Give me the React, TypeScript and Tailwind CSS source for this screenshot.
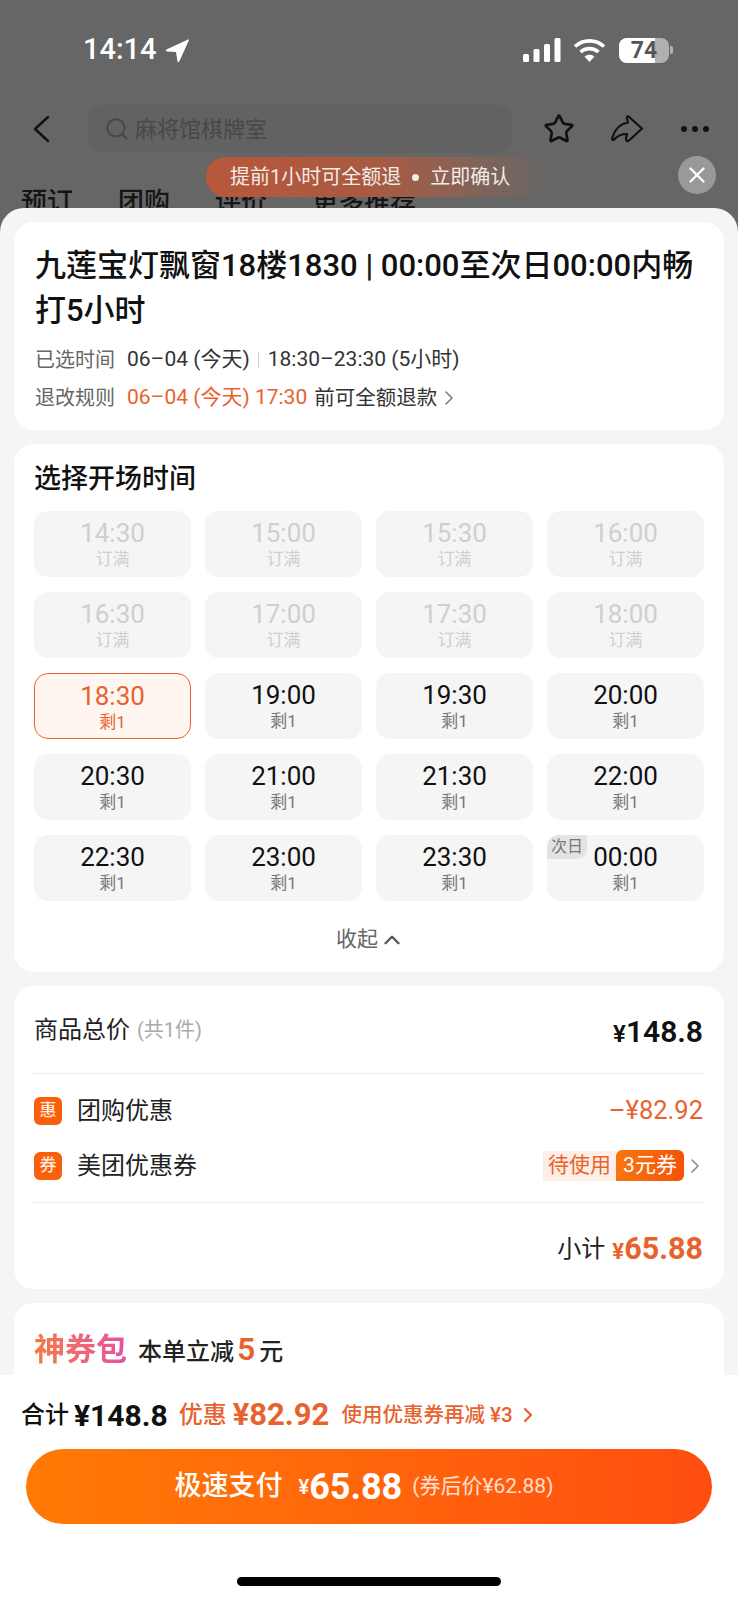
import { ChevronRight, ChevronUp, Search, Star, X } from 'lucide-react';

const slots = [
  { time: '14:30', full: true },
  { time: '15:00', full: true },
  { time: '15:30', full: true },
  { time: '16:00', full: true },
  { time: '16:30', full: true },
  { time: '17:00', full: true },
  { time: '17:30', full: true },
  { time: '18:00', full: true },
  { time: '18:30', selected: true },
  { time: '19:00' },
  { time: '19:30' },
  { time: '20:00' },
  { time: '20:30' },
  { time: '21:00' },
  { time: '21:30' },
  { time: '22:00' },
  { time: '22:30' },
  { time: '23:00' },
  { time: '23:30' },
  { time: '00:00', nextDay: true },
];

function StatusBar() {
  return (
    <div className="h-[100px] flex items-center pl-[83px] pr-[65px]">
      <span className="text-[29px] font-medium text-white">14:14</span>
      <svg className="ml-[8px]" width="24" height="25" viewBox="0 0 24 25" fill="#fff">
        <path d="M23 1.5 L1.5 11.5 Q0 12.8 2 13.5 L11 14 L12.5 23.5 Q13.5 25 14.5 23 L23.8 2.5 Q24 0.8 23 1.5Z" />
      </svg>
      <div className="ml-auto flex items-center">
        <svg width="38" height="24" viewBox="0 0 38 24" fill="#fff">
          <rect x="0" y="16" width="6" height="8" rx="1.5" />
          <rect x="10.5" y="11" width="6" height="13" rx="1.5" />
          <rect x="21" y="6" width="6" height="18" rx="1.5" />
          <rect x="31.5" y="0" width="6" height="24" rx="1.5" />
        </svg>
        <svg className="ml-[12px]" width="33" height="25" viewBox="0 0 33 25" fill="none" stroke="#fff" strokeWidth="3.6" strokeLinecap="butt">
          <path d="M2 8.5 C10 1 23 1 31 8.5" />
          <path d="M7.5 14 C12.5 9.5 20.5 9.5 25.5 14" />
          <path d="M16.5 24 L11.5 18.5 C14.5 16 18.5 16 21.5 18.5Z" fill="#fff" stroke="none" />
        </svg>
        <div className="ml-[13px] w-[50px] h-[25px] rounded-[8px] overflow-hidden relative flex bg-[#b0b0b0]">
          <div className="w-[36px] bg-white" />
          <span className="absolute inset-0 flex items-center justify-center text-[23px] font-bold text-[#555] leading-none">74</span>
        </div>
        <div className="ml-[1px] w-[3px] h-[8px] rounded-r-[2px] bg-[#b0b0b0]" />
      </div>
    </div>
  );
}

function NavBar() {
  return (
    <div className="mt-[5px] h-[48px] flex items-center">
      <svg className="ml-[32px]" width="20" height="28" viewBox="0 0 20 28" fill="none" stroke="#111" strokeWidth="2.4" strokeLinecap="round" strokeLinejoin="round">
        <path d="M16 2 L3 14 L16 26" />
      </svg>
      <div className="ml-[36px] w-[424px] h-[48px] rounded-[14px] bg-[#626262] flex items-center pl-[16px]">
        <Search size={26} strokeWidth={1.8} className="text-[#484848]" />
        <span className="ml-[5px] text-[22px] text-[#484848]">麻将馆棋牌室</span>
      </div>
      <Star className="ml-[31px] text-[#111]" size={32} strokeWidth={2} />
      <svg className="ml-[36px]" width="33" height="28" viewBox="0 0 33 28" fill="none" stroke="#111" strokeWidth="2.2" strokeLinejoin="round">
        <path d="M17.5 1.5 L31 13.5 L17.5 26 Q15.5 27 15 24 L16 19 Q8 19 3 24.5 Q0.5 26 1.5 22 Q6 9 17 7.5 L16 4 Q15.5 1 17.5 1.5Z" />
      </svg>
      <div className="ml-[37px] flex gap-[5px]">
        <span className="w-[6px] h-[6px] rounded-full bg-[#111]" />
        <span className="w-[6px] h-[6px] rounded-full bg-[#111]" />
        <span className="w-[6px] h-[6px] rounded-full bg-[#111]" />
      </div>
    </div>
  );
}

function SlotCell({ time, full, selected, nextDay }: { time: string; full?: boolean; selected?: boolean; nextDay?: boolean }) {
  let box = 'bg-[#f5f5f5]';
  let timeColor = 'text-[#111]';
  let subColor = 'text-[#777]';
  if (full) {
    timeColor = 'text-[#cfcfcf]';
    subColor = 'text-[#cfcfcf]';
  }
  if (selected) {
    box = 'bg-[#fff6f1] border-[1.5px] border-[#e8622e]';
    timeColor = 'text-[#e8622e]';
    subColor = 'text-[#e8622e]';
  }
  return (
    <div className={`relative h-[66px] rounded-[14px] flex flex-col items-center justify-start pt-[8px] ${box}`}>
      {nextDay && (
        <span className="absolute left-0 top-0 w-[40px] h-[24px] rounded-tl-[12px] rounded-br-[10px] bg-[#e3e3e3] flex items-center justify-center text-[16px] text-[#777]">次日</span>
      )}
      <span className={`text-[26px] leading-[29px] ${timeColor}`}>{time}</span>
      <span className={`text-[17px] leading-[22px] ${subColor}`}>{full ? '订满' : '剩1'}</span>
    </div>
  );
}

export default function App() {
  return (
    <div className="relative w-[738px] h-[1600px] overflow-hidden bg-[#666] flex flex-col font-['Roboto','Noto_Sans_CJK_SC',sans-serif]">
      {/* Page behind the sheet */}
      <div className="h-[208px] shrink-0 overflow-hidden">
        <StatusBar />
        <NavBar />
        <div className="mt-[34px] pl-[21px] flex gap-[45px] text-[26px] leading-[30px] font-medium text-[#151515]">
          <span>预订</span>
          <span>团购</span>
          <span>评价</span>
          <span>更多推荐</span>
        </div>
      </div>

      {/* Toast */}
      <div className="absolute left-[206px] top-[157px] w-[340px] h-[40px] rounded-l-[20px] bg-linear-to-r from-[#b8573a] via-[#a85a42] to-[#666] flex items-center pl-[24px] text-[20px] text-[#f0ece8]">
        提前1小时可全额退
        <span className="mx-[11px] w-[7px] h-[7px] rounded-full bg-[#f0ece8]" />
        立即确认
      </div>
      <div className="absolute left-[678px] top-[156px] w-[38px] h-[38px] rounded-full bg-[#999] flex items-center justify-center">
        <X size={26} strokeWidth={2.2} className="text-white" />
      </div>

      {/* Sheet */}
      <div className="flex-1 min-h-0 rounded-t-[24px] bg-[#f5f5f5] overflow-hidden px-[14px] pt-[14px] flex flex-col gap-[14px]">
        {/* Product */}
        <div className="h-[208px] shrink-0 rounded-[20px] bg-white px-[21px] pt-[21px]">
          <div className="text-[31px] leading-[45px] font-medium text-[#111]">九莲宝灯飘窗18楼1830 | 00:00至次日00:00内畅打5小时</div>
          <div className="mt-[8px] h-[38px] flex items-center text-[21px] text-[#333]">
            <span className="w-[92px] text-[20px] text-[#666]">已选时间</span>
            <span>06–04 (今天)</span>
            <span className="ml-[8px] mr-[9px] w-px h-[16px] bg-[#ccc]" />
            <span>18:30–23:30 (5小时)</span>
          </div>
          <div className="h-[38px] flex items-center text-[21px] text-[#333]">
            <span className="w-[92px] text-[20px] text-[#666]">退改规则</span>
            <span className="text-[#e8622e]">06–04 (今天) 17:30</span>
            <span className="ml-[7px] text-[20.5px]">前可全额退款</span>
            <ChevronRight size={24} strokeWidth={1.5} className="text-[#777]" />
          </div>
        </div>

        {/* Time picker */}
        <div className="h-[528px] shrink-0 rounded-[20px] bg-white px-[20px] pt-[18px]">
          <div className="text-[27px] leading-[34px] font-medium text-[#111]">选择开场时间</div>
          <div className="mt-[15px] grid grid-cols-4 gap-x-[14px] gap-y-[15px]">
            {slots.map((s) => (
              <SlotCell key={s.time} {...s} />
            ))}
          </div>
          <div className="mt-[24px] h-[30px] pl-[3px] flex items-center justify-center text-[21px] text-[#666]">
            收起
            <ChevronUp size={26} strokeWidth={2.2} className="ml-[1px] text-[#555]" />
          </div>
        </div>

        {/* Price detail */}
        <div className="h-[303px] shrink-0 rounded-[20px] bg-white px-[20px]">
          <div className="h-[88px] -mx-[2px] pl-[2px] pr-[3px] border-b border-[#eeeeee] flex items-center justify-between">
            <div className="flex items-center pt-[1px]">
              <span className="text-[24px] text-[#222]">商品总价</span>
              <span className="ml-[7px] text-[20px] text-[#aaa]">(共1件)</span>
            </div>
            <div className="pt-[4px] font-semibold text-[30px] text-[#111]">
              <span className="text-[24px]">¥</span>148.8
            </div>
          </div>
          <div className="-mx-[2px] pl-[2px] pr-[3px] pt-[9px] pb-[9px] border-b border-[#eeeeee]">
            <div className="h-[55px] flex items-center">
              <span className="w-[28px] h-[28px] rounded-[6px] bg-[#f8600c] flex items-center justify-center text-[17px] font-medium text-[#ffe9d8]">惠</span>
              <span className="ml-[15px] text-[24px] text-[#222]">团购优惠</span>
              <span className="ml-auto text-[25.5px] text-[#e8622e]">–¥82.92</span>
            </div>
            <div className="h-[55px] flex items-center">
              <span className="w-[28px] h-[28px] rounded-[6px] bg-[#f8600c] flex items-center justify-center text-[17px] font-medium text-[#ffe9d8]">券</span>
              <span className="ml-[15px] text-[24px] text-[#222]">美团优惠券</span>
              <div className="ml-auto flex items-center">
                <span className="h-[30px] px-[5px] bg-[#fdeee6] flex items-center text-[21px] text-[#e8622e]">待使用</span>
                <span className="h-[31px] w-[68px] rounded-r-[6px] rounded-tl-[6px] bg-linear-to-r from-[#f8760f] to-[#f5520a] flex items-center justify-center text-[21px] text-white">3元券</span>
                <ChevronRight size={24} strokeWidth={1.6} className="-ml-[1px] -mr-[4px] text-[#888]" />
              </div>
            </div>
          </div>
          <div className="h-[85px] pt-[6px] pr-[1px] flex items-center justify-end">
            <span className="text-[24px] text-[#222]">小计</span>
            <span className="ml-[7px] font-bold text-[30.5px] text-[#e8622e]">
              <span className="text-[22px]">¥</span>65.88
            </span>
          </div>
        </div>

        {/* Coupon pack, cut off by the bottom bar */}
        <div className="flex-1 min-h-0 overflow-hidden rounded-t-[20px] bg-white px-[20px] pt-[28px]">
          <div className="flex items-baseline leading-[36px]">
            <span className="text-[31px] font-bold bg-linear-to-r from-[#f5793b] to-[#e84fa0] bg-clip-text text-transparent">神券包</span>
            <span className="ml-[11px] text-[24px] font-medium text-[#222]">本单立减</span>
            <span className="ml-[3px] text-[32px] font-semibold text-[#e8622e]">5</span>
            <span className="ml-[4px] text-[24px] font-medium text-[#222]">元</span>
          </div>
        </div>
      </div>

      {/* Bottom bar */}
      <div className="h-[225px] shrink-0 bg-white pt-[22px]">
        <div className="h-[36px] pl-[21px] flex items-center">
          <span className="text-[24px] font-medium text-[#111]">合计</span>
          <span className="ml-[5px] text-[30px] font-bold text-[#111]">¥148.8</span>
          <span className="ml-[11px] text-[24px] font-medium text-[#e8622e]">优惠</span>
          <span className="ml-[6px] text-[31px] font-bold text-[#e8622e]">¥82.92</span>
          <span className="ml-[12px] text-[20.5px] font-medium text-[#e8622e]">使用优惠券再减 ¥3</span>
          <ChevronRight size={24} strokeWidth={2.2} className="ml-[3px] text-[#e8622e]" />
        </div>
        <div className="mt-[16px] mx-[26px] h-[75px] pr-[10px] rounded-full bg-linear-to-r from-[#ff7a05] to-[#ff4d10] flex items-center justify-center text-white">
          <span className="text-[27px] font-medium">极速支付</span>
          <span className="ml-[16px] text-[20px] font-medium">¥</span>
          <span className="text-[36px] font-bold">65.88</span>
          <span className="ml-[10px] text-[21px] text-white/80">(券后价¥62.88)</span>
        </div>
        <div className="mt-[53px] mx-auto w-[264px] h-[9px] rounded-full bg-black" />
      </div>
    </div>
  );
}
